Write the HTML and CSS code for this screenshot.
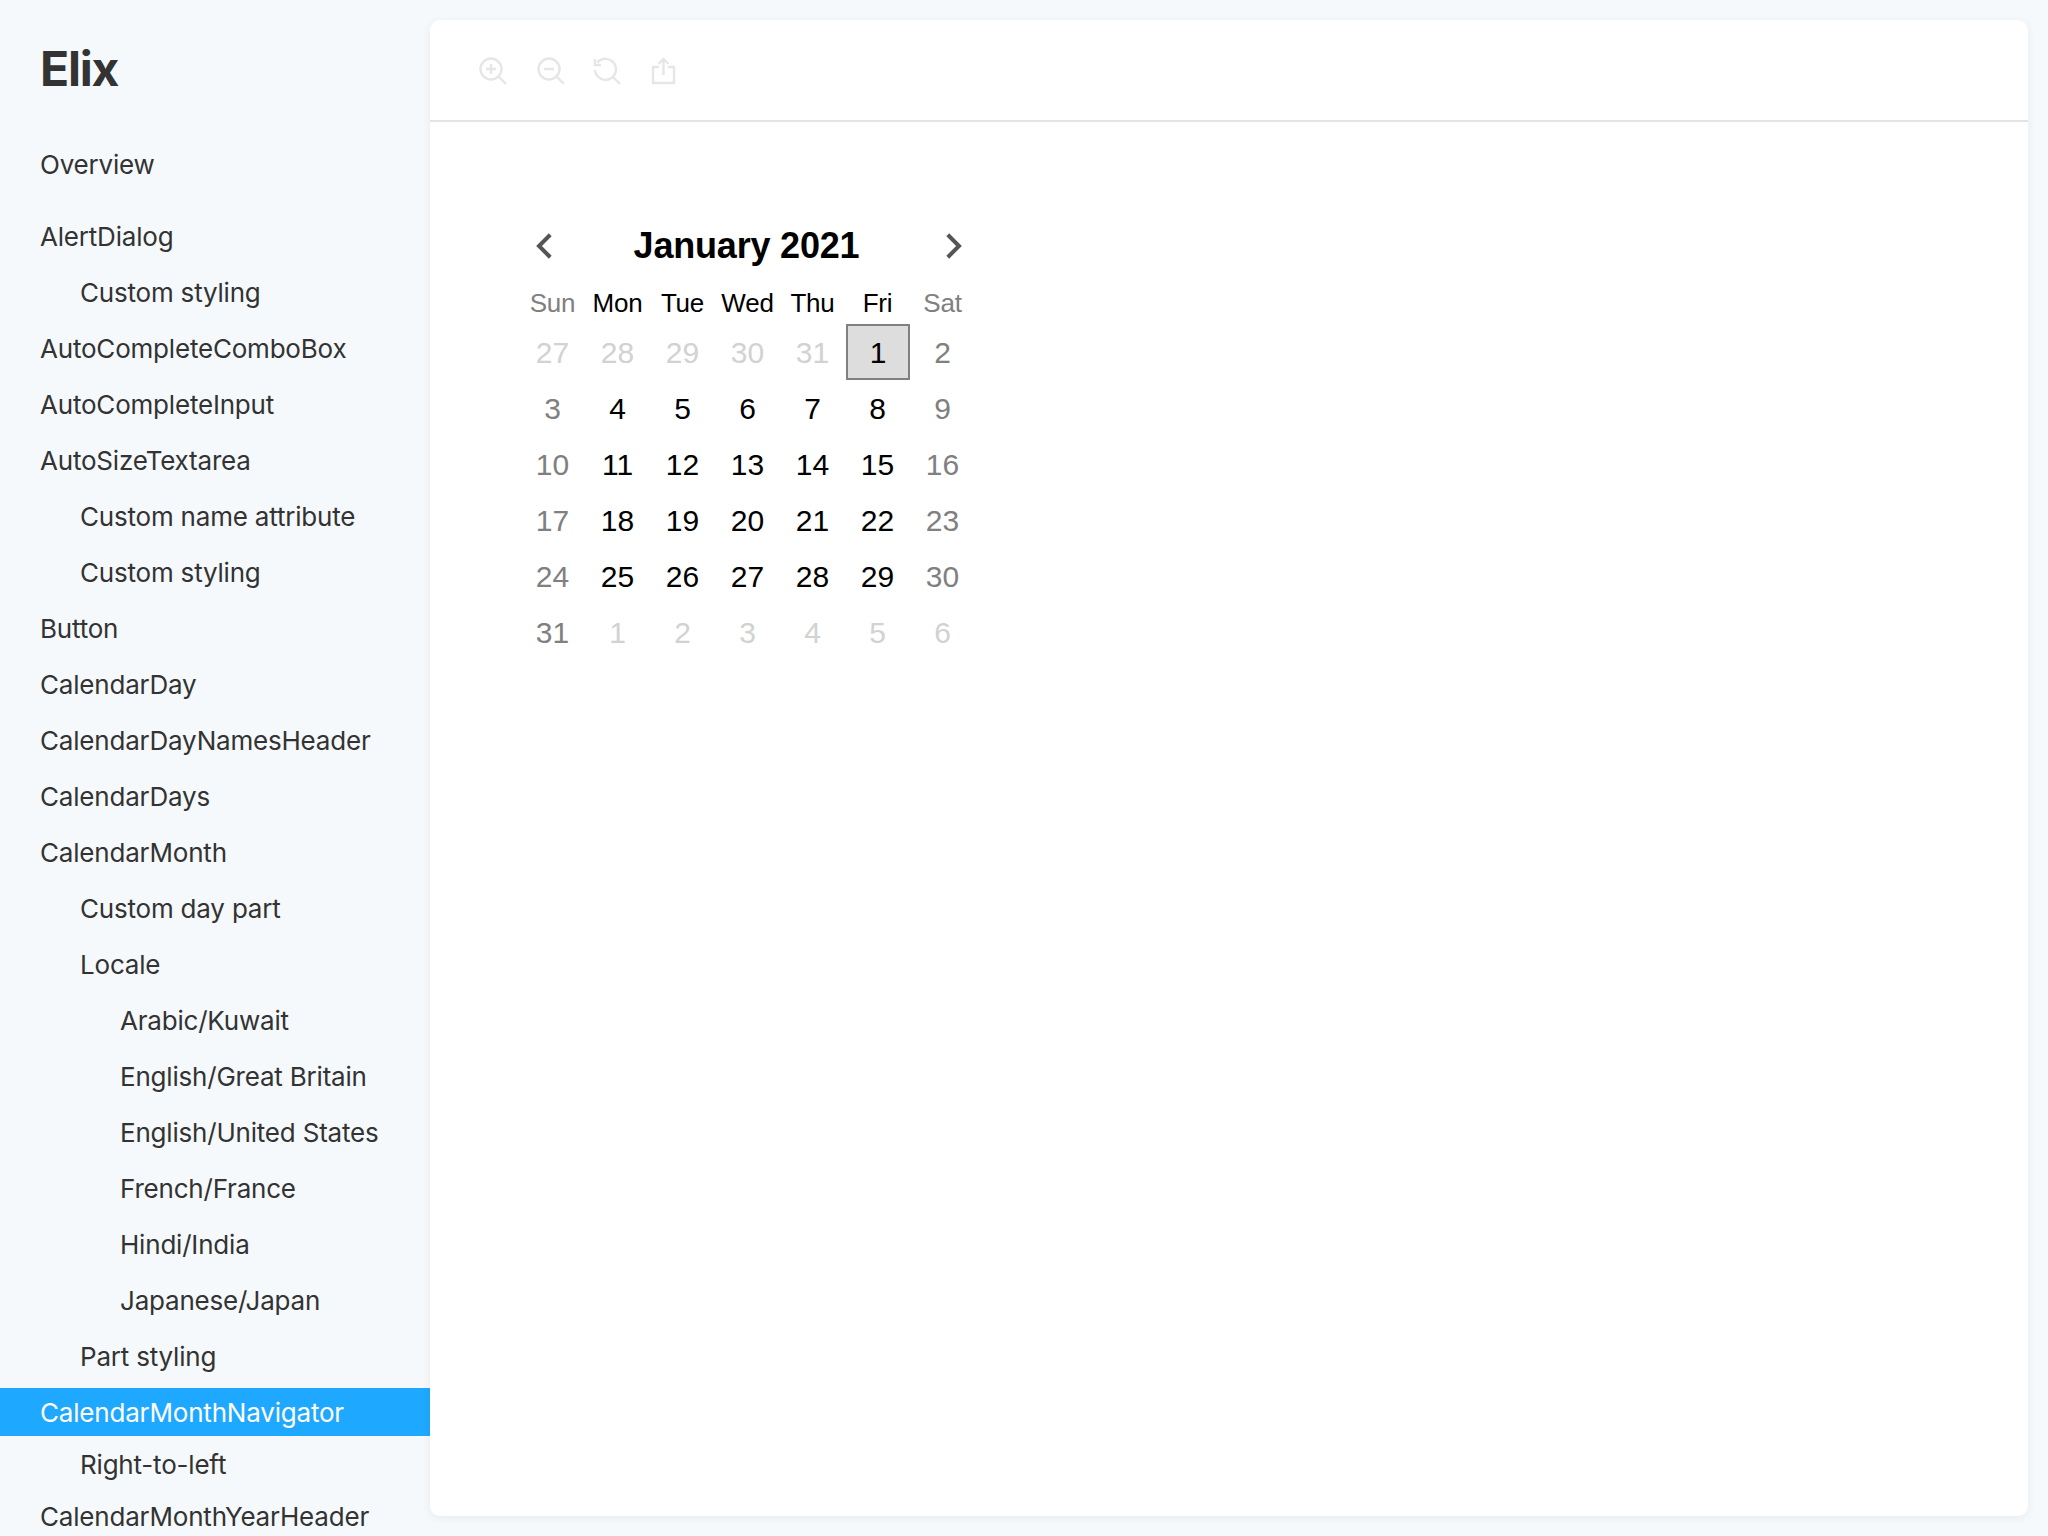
FILE: index.html
```html
<!DOCTYPE html>
<html lang="en">
<head>
<meta charset="utf-8">
<title>Elix</title>
<link rel="stylesheet" href="styles.css">
</head>
<body>
<div class="app">
  <nav class="sidebar">
    <h1 class="logo">Elix</h1>
    <ul class="nav">
      <li class="item overview">Overview</li>
      <li class="item">AlertDialog</li>
      <li class="item l2">Custom styling</li>
      <li class="item">AutoCompleteComboBox</li>
      <li class="item">AutoCompleteInput</li>
      <li class="item">AutoSizeTextarea</li>
      <li class="item l2">Custom name attribute</li>
      <li class="item l2">Custom styling</li>
      <li class="item">Button</li>
      <li class="item">CalendarDay</li>
      <li class="item">CalendarDayNamesHeader</li>
      <li class="item">CalendarDays</li>
      <li class="item">CalendarMonth</li>
      <li class="item l2">Custom day part</li>
      <li class="item l2">Locale</li>
      <li class="item l3">Arabic/Kuwait</li>
      <li class="item l3">English/Great Britain</li>
      <li class="item l3">English/United States</li>
      <li class="item l3">French/France</li>
      <li class="item l3">Hindi/India</li>
      <li class="item l3">Japanese/Japan</li>
      <li class="item l2">Part styling</li>
      <li class="item selected">CalendarMonthNavigator</li>
      <li class="item l2 after">Right-to-left</li>
      <li class="item after">CalendarMonthYearHeader</li>
    </ul>
  </nav>
  <main class="card">
    <div class="toolbar">
      <svg class="tool" viewBox="0 0 28 28"><circle cx="12" cy="12" r="10.5"/><path d="M19.5 19.5L27 27M12 7v10M7 12h10"/></svg>
      <svg class="tool" viewBox="-1 0 28 28"><circle cx="12" cy="12" r="10.5"/><path d="M19.5 19.5L27 27M7 12h10"/></svg>
      <svg class="tool" viewBox="0 0 28 28"><path d="M4.5 5.5A10.5 10.5 0 1 1 2 13M2 2v6h6M20 20L27 27"/></svg>
      <svg class="tool" viewBox="0 0 28 28"><path d="M9 10H3v16h21V10h-6M13.5 18V2M8.5 7l5-5 5 5"/></svg>
    </div>
    <section class="calendar">
      <header class="cal-head">
        <svg class="arrow" viewBox="0 0 16 24"><path d="M13 3L4 12l9 9"/></svg>
        <div class="cal-title">January 2021</div>
        <svg class="arrow" viewBox="0 0 16 24"><path d="M3 3l9 9-9 9"/></svg>
      </header>
      <div class="names">
        <span class="weekend">Sun</span><span>Mon</span><span>Tue</span><span>Wed</span><span>Thu</span><span>Fri</span><span class="weekend">Sat</span>
      </div>
      <div class="days">
        <span class="out">27</span><span class="out">28</span><span class="out">29</span><span class="out">30</span><span class="out">31</span><span class="today">1</span><span class="weekend">2</span>
        <span class="weekend">3</span><span>4</span><span>5</span><span>6</span><span>7</span><span>8</span><span class="weekend">9</span>
        <span class="weekend">10</span><span>11</span><span>12</span><span>13</span><span>14</span><span>15</span><span class="weekend">16</span>
        <span class="weekend">17</span><span>18</span><span>19</span><span>20</span><span>21</span><span>22</span><span class="weekend">23</span>
        <span class="weekend">24</span><span>25</span><span>26</span><span>27</span><span>28</span><span>29</span><span class="weekend">30</span>
        <span class="weekend">31</span><span class="out">1</span><span class="out">2</span><span class="out">3</span><span class="out">4</span><span class="out">5</span><span class="out">6</span>
      </div>
    </section>
  </main>
</div>
</body>
</html>
```
FILE: styles.css
```css
* { box-sizing: border-box; }
html, body { margin: 0; height: 100%; }
body { background: #f5f9fc; overflow: hidden; font-family: "Inter", "Liberation Sans", sans-serif; color: #333; }
.app { display: flex; height: 1536px; overflow: hidden; }
.sidebar { width: 430px; flex: none; overflow: hidden; }
.logo { margin: 0; padding: 40px 0 0 40px; height: 137px; font-size: 48px; line-height: 58px; font-weight: 700; letter-spacing: -1.2px; color: #333; }
.nav { list-style: none; margin: 0; padding: 0; font-size: 26px; letter-spacing: -.2px; }
.item { height: 56px; line-height: 56px; padding-left: 40px; white-space: nowrap; }
.overview { margin-bottom: 16px; }
.l2 { padding-left: 80px; }
.l3 { padding-left: 120px; }
.selected { height: 48px; line-height: 50px; margin-top: 3px; background: #1fa8ff; color: #fff; }
.after { height: 52px; line-height: 58px; }
.card { margin: 20px 20px 20px 0; flex: 1; background: #fff; border-radius: 10px; box-shadow: 0 2px 10px rgba(0, 0, 0, .06); }
.toolbar { display: flex; gap: 29px; align-items: center; height: 102px; padding: 2px 0 0 49px; border-bottom: 2px solid #e3e3e3; }
.tool { width: 28px; height: 28px; fill: none; stroke: #e6e6e6; stroke-width: 2.4; }
.calendar { width: 455px; margin: 97px 0 0 90px; font-family: "Liberation Sans", Arial, sans-serif; color: #000; }
.cal-head { display: flex; align-items: center; justify-content: space-between; height: 54px; padding: 0 10px 0 13px; }
.arrow { width: 22px; height: 30px; fill: none; stroke: #555; stroke-width: 3.2; }
.cal-title { font-size: 36px; font-weight: 700; letter-spacing: -.2px; margin-right: 5px; }
.names, .days { display: grid; grid-template-columns: repeat(7, 65px); text-align: center; }
.names { font-size: 26px; line-height: 42px; margin-top: 9px; letter-spacing: -.2px; }
.days { font-size: 30px; grid-auto-rows: 56px; line-height: 58px; }
.weekend { color: #808080; }
.out { color: #d2d2d2; }
.today { background: #ddd; border: 2px solid #808080; line-height: 54px; width: 64px; margin-left: 1px; }
```
